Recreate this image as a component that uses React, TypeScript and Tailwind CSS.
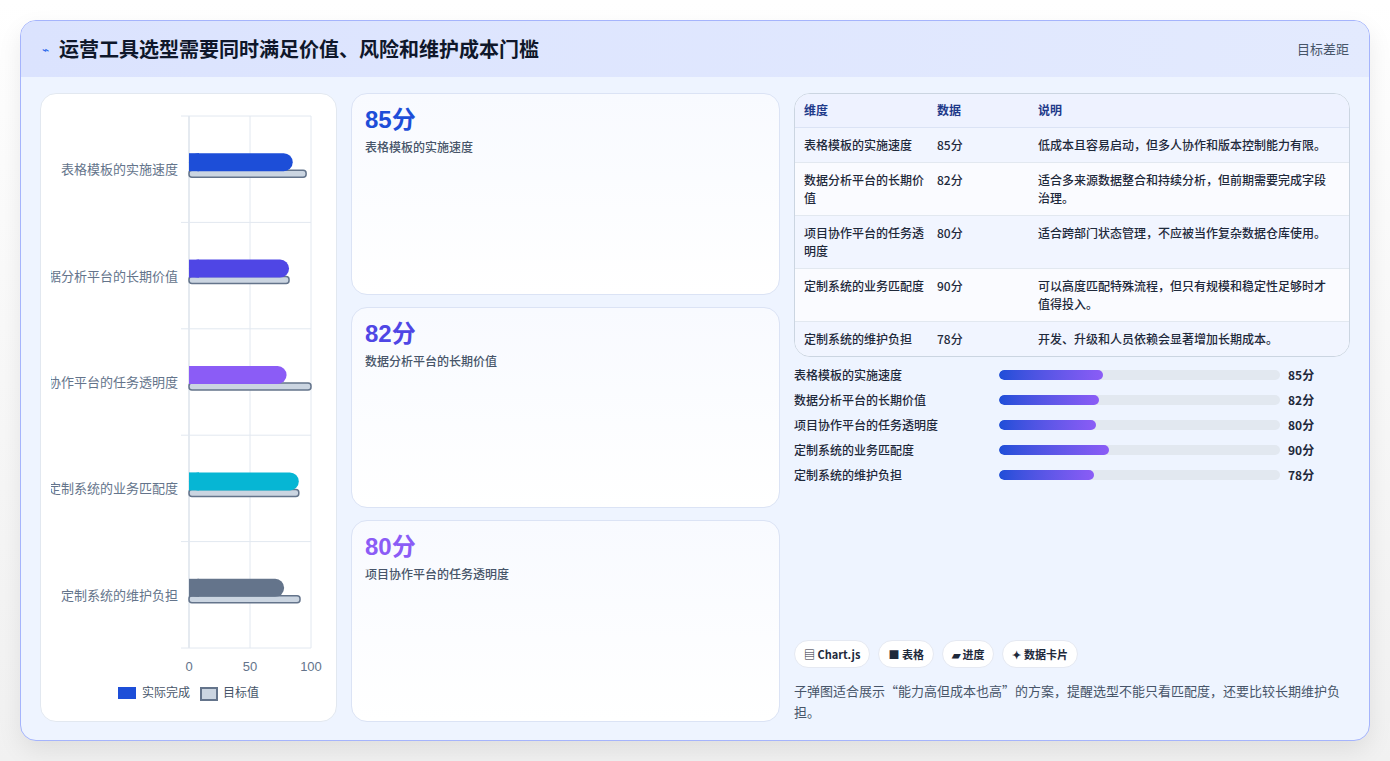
import React from "react";

const rows = [
  { name: "表格模板的实施速度", v: 85, t: 96, c: "#1d4ed8", d: "低成本且容易启动，但多人协作和版本控制能力有限。" },
  { name: "数据分析平台的长期价值", v: 82, t: 82, c: "#4f46e5", d: "适合多来源数据整合和持续分析，但前期需要完成字段治理。" },
  { name: "项目协作平台的任务透明度", v: 80, t: 100, c: "#8b5cf6", d: "适合跨部门状态管理，不应被当作复杂数据仓库使用。" },
  { name: "定制系统的业务匹配度", v: 90, t: 90, c: "#06b6d4", d: "可以高度匹配特殊流程，但只有规模和稳定性足够时才值得投入。" },
  { name: "定制系统的维护负担", v: 78, t: 91, c: "#64748b", d: "开发、升级和人员依赖会显著增加长期成本。" },
];
const barW = [104, 100, 97, 110, 95];
const font = { fontFamily: '"Noto Sans CJK SC", "Noto Sans", sans-serif' };

function Chart() {
  const x0 = 148, sc = 1.22, top = 22, rh = 106.4;
  return (
    <svg width="296" height="628" className="block">
      <defs>
        <clipPath id="cl"><rect x="10" y="0" width="286" height="628" /></clipPath>
      </defs>
      {[0, 50, 100].map((t) => (
        <line key={t} x1={x0 + t * sc} x2={x0 + t * sc} y1={top} y2={top + rh * 5} stroke={t === 0 ? "#cbd5e1" : "#e2e8f0"} />
      ))}
      {[0, 1, 2, 3, 4, 5].map((i) => (
        <line key={i} x1={x0 - 8} x2={x0 + 122} y1={top + i * rh} y2={top + i * rh} stroke="#e2e8f0" />
      ))}
      {rows.map((r, i) => {
        const cy = top + i * rh + rh / 2;
        return (
          <g key={i}>
            <g clipPath="url(#cl)">
              <text x={x0 - 11} y={cy + 5} textAnchor="end" fontSize="13" fill="#64748b" style={font}>{r.name}</text>
            </g>
            <rect x={x0} y={cy + 1} width={r.t * sc} height={7} rx={3} fill="#cbd5e1" stroke="#64748b" strokeWidth="1.5" />
            <rect x={x0} y={cy - 16} width={r.v * sc} height={18} rx={9} fill={r.c} />
            <rect x={x0} y={cy - 16} width={10} height={18} fill={r.c} />
          </g>
        );
      })}
      {[0, 50, 100].map((t) => (
        <text key={t} x={x0 + t * sc} y={577} textAnchor="middle" fontSize="13" fill="#64748b" style={{ fontFamily: "Liberation Sans, sans-serif" }}>{t}</text>
      ))}
      <rect x="77" y="593" width="18" height="12" fill="#1d4ed8" />
      <text x="101" y="603" fontSize="12" fill="#475569" style={font}>实际完成</text>
      <rect x="160" y="594" width="16" height="12" fill="#cbd5e1" stroke="#64748b" strokeWidth="2" />
      <text x="182" y="603" fontSize="12" fill="#475569" style={font}>目标值</text>
    </svg>
  );
}

export default function App() {
  return (
    <div className="min-h-[761px] bg-gradient-to-b from-white to-[#f1f1f1] p-5" style={font}>
      <div className="w-[1350px] h-[721px] rounded-2xl border border-[#a5b4fc] bg-[#eef4ff] shadow-[0_10px_25px_rgba(0,0,0,0.08)] overflow-hidden flex flex-col">
        <div className="h-[56px] shrink-0 flex items-center justify-between px-5 bg-gradient-to-r from-[#dbe3fe] to-[#e3eafe]">
          <div className="flex items-center gap-[10px] pl-[1px]">
            <span className="text-[12px] text-[#2563eb]">⌁</span>
            <span className="text-[20px] font-bold text-[#0f172a]">运营工具选型需要同时满足价值、风险和维护成本门槛</span>
          </div>
          <span className="text-[13px] text-[#475569]">目标差距</span>
        </div>
        <div className="flex gap-[14px] px-[19px] pt-[16px] pb-[18px] flex-1 min-h-0">
          <div className="w-[297px] shrink-0 rounded-2xl bg-white border border-[#e2e8f0] overflow-hidden">
            <Chart />
          </div>
          <div className="w-[429px] shrink-0 flex flex-col gap-[12px]">
            {[0, 1, 2].map((i) => (
              <div key={i} className="flex-1 rounded-2xl border border-[#dbe3f5] bg-gradient-to-b from-[#f8faff] to-white px-[13px] pt-[10px]">
                <div className="text-[24px] font-bold leading-[32px]" style={{ color: rows[i].c, fontFamily: '"Liberation Sans", "Noto Sans CJK SC", sans-serif' }}>{rows[i].v}分</div>
                <div className="text-[12px] text-[#475569] font-medium mt-[2px]">{rows[i].name}</div>
              </div>
            ))}
          </div>
          <div className="flex-1 flex flex-col">
            <div className="rounded-2xl border border-[#cbd5e1] overflow-hidden bg-white">
              <table className="w-full text-[12px] text-[#1e293b] font-medium">
                <thead>
                  <tr className="bg-[#eef2ff] text-[#1e3a8a] border-b border-[#dbe3f5]">
                    <th className="text-left font-semibold h-[33px] pl-[9px] w-[142px]">维度</th>
                    <th className="text-left font-semibold w-[101px]">数据</th>
                    <th className="text-left font-semibold">说明</th>
                  </tr>
                </thead>
                <tbody>
                  {rows.map((r, i) => (
                    <tr key={i} className={(i % 2 === 0 ? "bg-[#f1f5ff]" : "bg-[#fafbff]") + (i < 4 ? " border-b border-[#e2e8f0]" : "")}>
                      <td className="pl-[9px] pr-3 py-[8px] leading-[18px] align-top">{r.name}</td>
                      <td className="py-[8px] leading-[18px] align-top">{r.v}分</td>
                      <td className="py-[8px] pr-3 leading-[18px] align-top">{r.d}</td>
                    </tr>
                  ))}
                </tbody>
              </table>
            </div>
            <div className="mt-[9px] flex flex-col gap-[7px]">
              {rows.map((r, i) => (
                <div key={i} className="flex items-center h-[18px] text-[12px] text-[#1e293b] font-medium">
                  <div className="w-[205px]">{r.name}</div>
                  <div className="w-[281px] h-[10px] rounded-full bg-[#e2e8f0] overflow-hidden">
                    <div className="h-full rounded-full bg-gradient-to-r from-[#1d4ed8] to-[#8b5cf6]" style={{ width: barW[i] }} />
                  </div>
                  <div className="ml-[8px] font-bold">{r.v}分</div>
                </div>
              ))}
            </div>
            <div className="mt-auto flex gap-[8px]">
              {["▤ Chart.js", "■ 表格", "▰ 进度", "✦ 数据卡片"].map((c) => (
                <span key={c} className="h-[28px] px-[9px] flex items-center rounded-full bg-white border border-[#e5e9f2] text-[11px] font-semibold text-[#1e293b]">{c}</span>
              ))}
            </div>
            <p className="mt-[12px] text-[13px] leading-[21px] text-[#475569]">子弹图适合展示“能力高但成本也高”的方案，提醒选型不能只看匹配度，还要比较长期维护负担。</p>
          </div>
        </div>
      </div>
    </div>
  );
}
